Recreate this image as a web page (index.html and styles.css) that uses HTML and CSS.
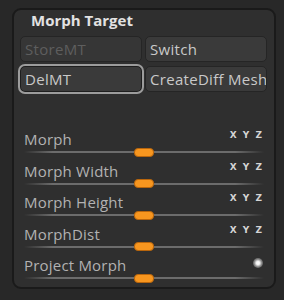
FILE: index.html
```html
<!DOCTYPE html>
<html>
<head>
<meta charset="utf-8">
<link rel="stylesheet" href="styles.css">
</head>
<body>
<div class="panel">
  <div class="title">Morph Target</div>
  <div class="buttons">
    <div class="btn disabled">StoreMT</div>
    <div class="btn">Switch</div>
    <div class="btn active">DelMT</div>
    <div class="btn">CreateDiff Mesh</div>
  </div>
  <div class="sliders">
    <div class="row">
      <div class="line"><span class="label">Morph</span><span class="xyz">X Y Z</span></div>
      <div class="slider"><div class="thumb"></div></div>
    </div>
    <div class="row">
      <div class="line"><span class="label">Morph Width</span><span class="xyz">X Y Z</span></div>
      <div class="slider"><div class="thumb"></div></div>
    </div>
    <div class="row">
      <div class="line"><span class="label">Morph Height</span><span class="xyz">X Y Z</span></div>
      <div class="slider"><div class="thumb"></div></div>
    </div>
    <div class="row">
      <div class="line"><span class="label">MorphDist</span><span class="xyz">X Y Z</span></div>
      <div class="slider"><div class="thumb"></div></div>
    </div>
    <div class="row">
      <div class="line"><span class="label">Project Morph</span><span class="dot"></span></div>
      <div class="slider"><div class="thumb"></div></div>
    </div>
  </div>
</div>
</body>
</html>
```
FILE: styles.css
```css
html, body {
  margin: 0;
  padding: 0;
  background: #282828;
  width: 284px;
  height: 300px;
  overflow: hidden;
}
body {
  font-family: "Open Sans", "Noto Sans", sans-serif;
}
.panel {
  box-sizing: border-box;
  margin: 8px 8px 0 12px;
  width: 264px;
  height: 281px;
  border: 2px solid #1a1a1a;
  border-radius: 9px;
  background: #2f2f2f;
  padding: 0 7px 0 6px;
}
.title {
  margin: 1px 0 0 11px;
  font-size: 15px;
  font-weight: 700;
  line-height: 18px;
  color: #e2e2e2;
}
.buttons {
  margin-top: 7px;
  display: grid;
  grid-template-columns: 122px 122px;
  grid-template-rows: 26px 26px;
  column-gap: 3px;
  row-gap: 4px;
}
.btn {
  box-sizing: border-box;
  background: #3a3a3a;
  border: 1px solid #252525;
  border-radius: 5px;
  color: #c9c9c9;
  font-size: 15px;
  line-height: 24px;
  letter-spacing: 0.3px;
  padding-left: 4px;
  white-space: nowrap;
  overflow: hidden;
}
.btn.disabled {
  background: #363636;
  color: #5e5e5e;
}
.btn.active {
  border: 1px solid #1e1e1e;
  outline: 2px solid #9c9c9c;
  outline-offset: 0;
}
.sliders {
  margin: 39px 3px 0 4px;
}
.row {
  height: 31.5px;
}
.line {
  display: flex;
  justify-content: space-between;
  align-items: flex-start;
  height: 16px;
  padding-right: 2px;
}
.label {
  font-size: 15px;
  line-height: 16px;
  letter-spacing: 0.2px;
  color: #b2b2b2;
}
.xyz {
  font-family: "DejaVu Sans", sans-serif;
  font-size: 9px;
  font-weight: 700;
  line-height: 8px;
  color: #d4d4d4;
  word-spacing: 3px;
}
.dot {
  width: 10px;
  height: 10px;
  margin: 1px -1px 0 0;
  border-radius: 50%;
  background: radial-gradient(circle, #ffffff 0, #f0f0f0 25%, rgba(200,200,200,0.55) 55%, rgba(120,120,120,0) 100%);
}
.slider {
  position: relative;
  height: 10px;
  background: linear-gradient(to right, rgba(110,110,110,0) 0, #6c6c6c 12%, #6c6c6c 88%, rgba(110,110,110,0) 100%) center / 100% 2px no-repeat;
}
.thumb {
  position: absolute;
  left: 50%;
  top: 0.5px;
  width: 20px;
  height: 9px;
  margin-left: -10px;
  box-sizing: border-box;
  border-radius: 4px;
  background: #f7961f;
  border: 1px solid #b8650c;
}
```
